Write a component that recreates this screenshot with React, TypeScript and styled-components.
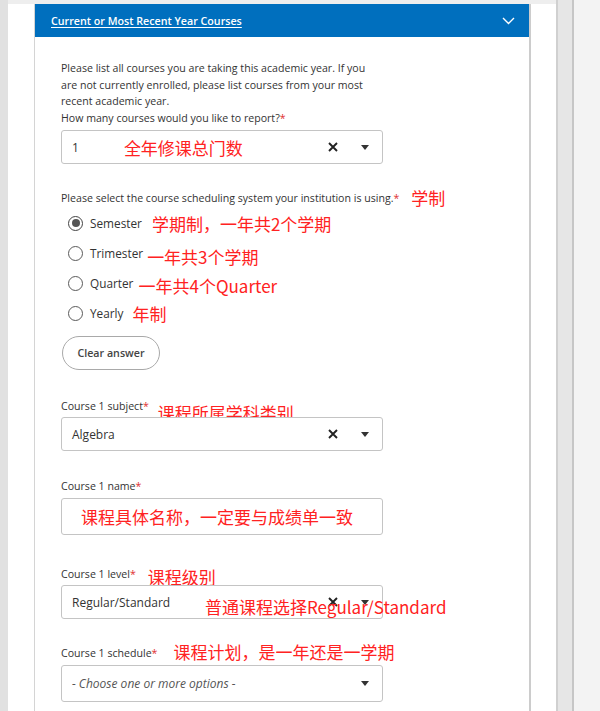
import React from "react";
import styled, { createGlobalStyle } from "styled-components";

const Global = createGlobalStyle`
  html, body { margin: 0; padding: 0; background: #f3f3f3; }
  body { font-family: "Open Sans", "Noto Sans", sans-serif; color: #333; }
  * { box-sizing: border-box; }
`;

const Page = styled.div`
  display: flex;
  width: 600px;
  height: 711px;
  overflow: hidden;
  background: #f3f3f3;
`;

const LeftGutter = styled.div`
  flex: none;
  width: 8px;
  background: #e1e1e1;
`;

const Main = styled.div`
  flex: none;
  width: 548px;
  background: #fff;
  border-top: 4px solid #eeeeee;
  padding: 0 25px 0 26px;
`;

const RightRail = styled.div`
  flex: none;
  width: 18px;
  background: #e6e6e6;
  border-left: 2px solid #d0d0d0;
  border-right: 2px solid #c6c6c6;
`;

const RightSpace = styled.div`
  flex: 1;
  background: #f3f3f3;
`;

const Card = styled.section`
  height: 100%;
  border-left: 1px solid #d4d4d4;
  border-right: 2px solid #cccccc;
`;

const Header = styled.div`
  height: 33px;
  background: #006fbe;
  display: flex;
  align-items: center;
  justify-content: space-between;
  padding: 0 14px 0 16px;
`;

const HeaderTitle = styled.a`
  color: #fff;
  font-size: 10.7px;
  font-weight: 600;
  text-decoration: underline;
  text-underline-offset: 2px;
`;

const Body = styled.div`
  padding: 23px 0 0 26px;
`;

const Intro = styled.p`
  margin: 0;
  width: 318px;
  font-size: 10.6px;
  line-height: 16.6px;
  color: #333;
`;

const Req = styled.span`
  color: #e03030;
`;

const Field = styled.div<{ $mt: number }>`
  margin-top: ${(p) => p.$mt}px;
`;

const LabelRow = styled.div`
  display: flex;
  align-items: center;
  height: 17px;
  font-size: 10.6px;
  color: #333;
  white-space: nowrap;
`;

const Note = styled.span<{ $ml?: number; $dy?: number }>`
  font-family: "Noto Sans CJK SC", "Noto Sans", sans-serif;
  font-size: 17px;
  line-height: 17px;
  color: #ff2222;
  white-space: nowrap;
  margin-left: ${(p) => p.$ml ?? 0}px;
  position: relative;
  top: ${(p) => p.$dy ?? 0}px;
`;

const FloatNote = styled(Note)<{ $x: number; $y: number }>`
  position: absolute;
  left: ${(p) => p.$x}px;
  top: ${(p) => p.$y}px;
  margin-left: 0;
`;

const Box = styled.div<{ $h: number; $mt?: number; $pl?: number }>`
  position: relative;
  width: 322px;
  height: ${(p) => p.$h}px;
  margin-top: ${(p) => p.$mt ?? 3}px;
  border: 1px solid #c4c4c4;
  border-radius: 3px;
  background: #fff;
  display: flex;
  align-items: center;
  padding: 0 0 0 ${(p) => p.$pl ?? 10}px;
`;

const Value = styled.span<{ $italic?: boolean }>`
  font-size: 12px;
  color: ${(p) => (p.$italic ? "#555" : "#333")};
  font-style: ${(p) => (p.$italic ? "italic" : "normal")};
  white-space: nowrap;
`;

const Controls = styled.div`
  margin-left: auto;
  display: flex;
  align-items: center;
`;

const ClearIcon = styled.svg`
  width: 10px;
  height: 10px;
  margin-right: 23px;
`;

const Caret = styled.svg`
  width: 8px;
  height: 5px;
  margin-right: 13px;
`;

const RadioGroup = styled.div`
  display: flex;
  flex-direction: column;
  margin-top: 2px;
`;

const RadioRow = styled.label`
  display: flex;
  align-items: center;
  height: 30px;
  padding-left: 7px;
  font-size: 11.8px;
  color: #333;
`;

const RadioCircle = styled.span<{ $checked?: boolean }>`
  flex: none;
  width: 15px;
  height: 15px;
  border-radius: 50%;
  border: 1.4px solid ${(p) => (p.$checked ? "#444" : "#5a5a5a")};
  display: flex;
  align-items: center;
  justify-content: center;
  margin-right: 7px;
  &::after {
    content: "";
    width: 8px;
    height: 8px;
    border-radius: 50%;
    background: ${(p) => (p.$checked ? "#555" : "transparent")};
  }
`;

const ClearButton = styled.button`
  margin-top: 8px;
  margin-left: 1px;
  width: 98px;
  height: 34px;
  border: 1px solid #a9a9a9;
  border-radius: 17px;
  background: #fff;
  font-family: "Open Sans", "Noto Sans", sans-serif;
  font-size: 10.7px;
  font-weight: 600;
  color: #444;
  padding: 0;
`;

const Chevron = () => (
  <svg width="13" height="8" viewBox="0 0 13 8">
    <path d="M1 1 L6.5 6.5 L12 1" fill="none" stroke="#fff" strokeWidth="1.4" />
  </svg>
);

const SelectControls = ({ clear = true }: { clear?: boolean }) => (
  <Controls>
    {clear && (
      <ClearIcon viewBox="0 0 10 10">
        <path d="M1 1 L9 9 M9 1 L1 9" stroke="#222" strokeWidth="1.9" />
      </ClearIcon>
    )}
    <Caret viewBox="0 0 8 5">
      <path d="M0 0 H8 L4 5 Z" fill="#333" />
    </Caret>
  </Controls>
);

const options = [
  { label: "Semester", note: "学期制，一年共2个学期", ml: 10, dy: 0, checked: true },
  { label: "Trimester", note: "一年共3个学期", ml: 4, dy: 3, checked: false },
  { label: "Quarter", note: "一年共4个Quarter", ml: 5, dy: 2, checked: false },
  { label: "Yearly", note: "年制", ml: 9, dy: 0, checked: false },
];

export default function App() {
  return (
    <>
      <Global />
      <Page>
        <LeftGutter />
        <Main>
          <Card>
            <Header>
              <HeaderTitle>Current or Most Recent Year Courses</HeaderTitle>
              <Chevron />
            </Header>
            <Body>
              <Intro>
                Please list all courses you are taking this academic year. If you are not currently
                enrolled, please list courses from your most recent academic year.
                <br />
                How many courses would you like to report?<Req>*</Req>
              </Intro>
              <Box $h={34} $mt={4}>
                <Value>1</Value>
                <Note $ml={45}>全年修课总门数</Note>
                <SelectControls />
              </Box>

              <Field $mt={25}>
                <LabelRow>
                  Please select the course scheduling system your institution is using.<Req>*</Req>
                  <Note $ml={12}>学制</Note>
                </LabelRow>
                <RadioGroup>
                  {options.map((o) => (
                    <RadioRow key={o.label}>
                      <RadioCircle $checked={o.checked} />
                      {o.label}
                      <Note $ml={o.ml} $dy={o.dy}>
                        {o.note}
                      </Note>
                    </RadioRow>
                  ))}
                </RadioGroup>
                <ClearButton>Clear answer</ClearButton>
              </Field>

              <Field $mt={27}>
                <LabelRow>
                  Course 1 subject<Req>*</Req>
                  <Note $ml={9} $dy={7}>课程所属学科类别</Note>
                </LabelRow>
                <Box $h={34}>
                  <Value>Algebra</Value>
                  <SelectControls />
                </Box>
              </Field>

              <Field $mt={26}>
                <LabelRow>
                  Course 1 name<Req>*</Req>
                </LabelRow>
                <Box $h={37} $mt={4} $pl={19}>
                  <Note>课程具体名称，一定要与成绩单一致</Note>
                </Box>
              </Field>

              <Field $mt={30}>
                <LabelRow>
                  Course 1 level<Req>*</Req>
                  <Note $ml={12} $dy={3}>课程级别</Note>
                </LabelRow>
                <Box $h={34}>
                  <Value>Regular/Standard</Value>
                  <SelectControls />
                  <FloatNote $x={143} $y={12}>普通课程选择Regular/Standard</FloatNote>
                </Box>
              </Field>

              <Field $mt={25}>
                <LabelRow>
                  Course 1 schedule<Req>*</Req>
                  <Note $ml={16} $dy={-1}>课程计划，是一年还是一学期</Note>
                </LabelRow>
                <Box $h={37} $mt={4}>
                  <Value $italic>- Choose one or more options -</Value>
                  <SelectControls clear={false} />
                </Box>
              </Field>
            </Body>
          </Card>
        </Main>
        <RightRail />
        <RightSpace />
      </Page>
    </>
  );
}
